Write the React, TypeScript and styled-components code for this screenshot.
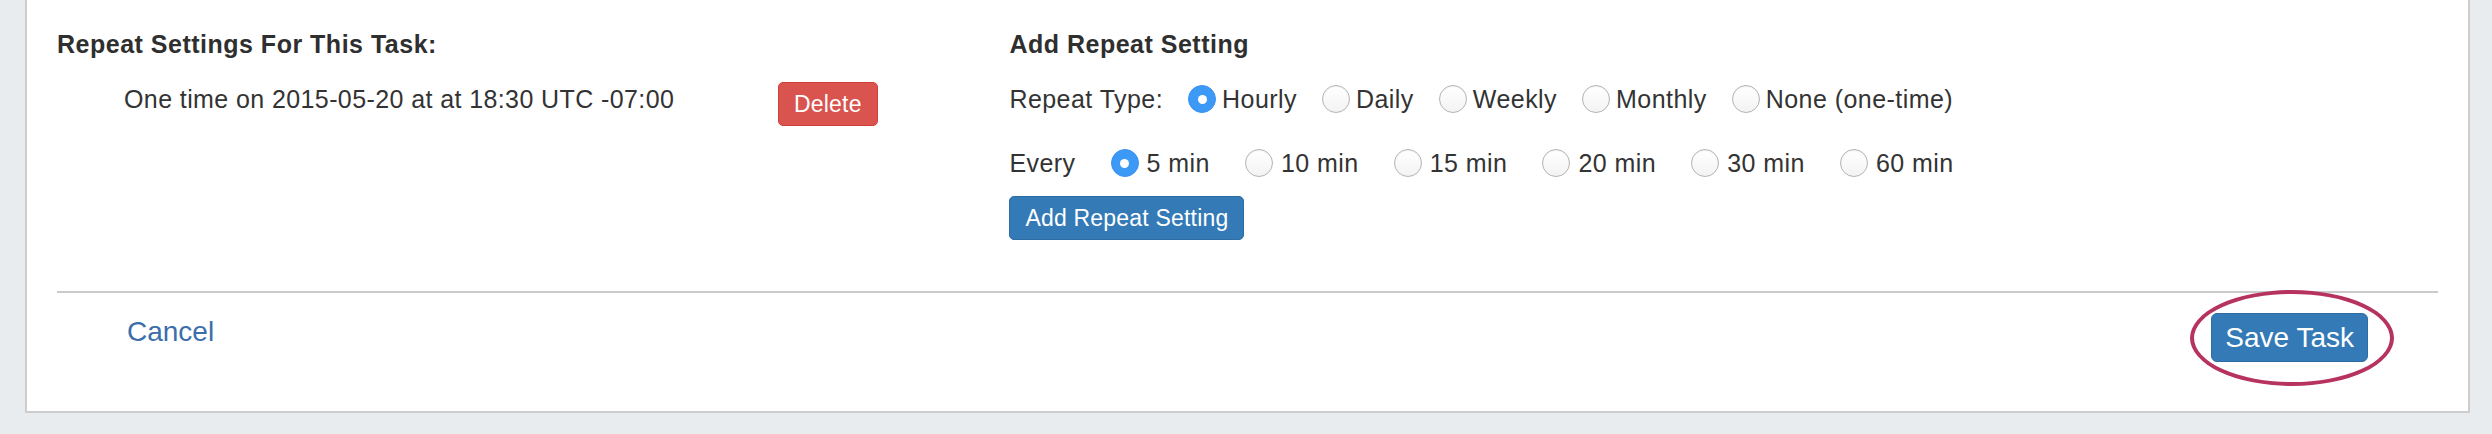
import styled, { createGlobalStyle } from "styled-components";

const GlobalStyle = createGlobalStyle`
  html, body {
    margin: 0;
    padding: 0;
    background: #e8ecef;
  }
  body {
    min-height: 434px;
    font-family: "Liberation Sans", Arial, sans-serif;
    color: #333;
  }
`;

const repeatTypes = ["Hourly", "Daily", "Weekly", "Monthly", "None (one-time)"];
const intervals = ["5 min", "10 min", "15 min", "20 min", "30 min", "60 min"];

const App = () => {
  return (
    <>
      <GlobalStyle />
      <Panel>
        <Columns>
          <Column>
            <Heading>Repeat Settings For This Task:</Heading>
            <SettingItem>
              <SettingText>One time on 2015-05-20 at at 18:30 UTC -07:00</SettingText>
              <SmallButton $variant="danger">Delete</SmallButton>
            </SettingItem>
          </Column>

          <Column>
            <Heading>Add Repeat Setting</Heading>
            <OptionRow $gap={25}>
              <RowLabel>Repeat Type:</RowLabel>
              {repeatTypes.map((t, i) => (
                <Choice key={t} $textGap={6}>
                  <Radio $checked={i === 0} />
                  {t}
                </Choice>
              ))}
            </OptionRow>
            <OptionRow $gap={35} $top={30}>
              <RowLabel>Every</RowLabel>
              {intervals.map((t, i) => (
                <Choice key={t} $textGap={8}>
                  <Radio $checked={i === 0} />
                  {t}
                </Choice>
              ))}
            </OptionRow>
            <SmallButton $variant="primary" style={{ marginTop: 16 }}>
              Add Repeat Setting
            </SmallButton>
          </Column>
        </Columns>

        <Divider />

        <Footer>
          <CancelLink href="#">Cancel</CancelLink>
          <Highlight>
            <SaveButton>Save Task</SaveButton>
            <Circle />
          </Highlight>
        </Footer>
      </Panel>
    </>
  );
};

const Panel = styled.div`
  margin: 0 22px 0 25px;
  padding: 27px 30px 49px;
  background: #fff;
  border: 2px solid #cdcdcd;
  border-top: none;
`;

const Columns = styled.div`
  display: grid;
  grid-template-columns: 40% 1fr;
`;

const Column = styled.div`
  display: flex;
  flex-direction: column;
  align-items: flex-start;
`;

const Heading = styled.div`
  font-size: 25px;
  line-height: 34px;
  font-weight: bold;
  letter-spacing: 0.5px;
  color: #2f2f2f;
`;

const SettingItem = styled.div`
  display: grid;
  grid-template-columns: 654px auto;
  align-items: start;
  margin-top: 21px;
  padding-left: 67px;
`;

const SettingText = styled.div`
  font-size: 25px;
  line-height: 34px;
  letter-spacing: 0.4px;
`;

const SmallButton = styled.button<{ $variant: "danger" | "primary" }>`
  font-family: "Liberation Sans", Arial, sans-serif;
  font-size: 23px;
  line-height: 34px;
  letter-spacing: 0.2px;
  padding: 4px 15px;
  border-radius: 5px;
  color: #fff;
  cursor: pointer;
  border: 1px solid ${(p) => (p.$variant === "danger" ? "#d43f3a" : "#2e6da4")};
  background: ${(p) => (p.$variant === "danger" ? "#d9534f" : "#337ab7")};
`;

const OptionRow = styled.div<{ $gap: number; $top?: number }>`
  display: flex;
  align-items: center;
  gap: ${(p) => p.$gap}px;
  margin-top: ${(p) => p.$top ?? 21}px;
  font-size: 25px;
  line-height: 34px;
  letter-spacing: 0.45px;
`;

const RowLabel = styled.span``;

const Choice = styled.label<{ $textGap: number }>`
  display: flex;
  align-items: center;
  gap: ${(p) => p.$textGap}px;
  white-space: nowrap;
`;

const Radio = styled.span<{ $checked: boolean }>`
  width: 28px;
  height: 28px;
  box-sizing: border-box;
  border-radius: 50%;
  display: flex;
  align-items: center;
  justify-content: center;
  border: 1px solid ${(p) => (p.$checked ? "#3b92f0" : "#b4b4b4")};
  background: ${(p) =>
    p.$checked ? "#3d99f6" : "linear-gradient(#ffffff, #f3f3f3)"};
  box-shadow: ${(p) => (p.$checked ? "none" : "inset 0 1px 1px rgba(0,0,0,0.06)")};

  &::after {
    content: "";
    display: ${(p) => (p.$checked ? "block" : "none")};
    width: 9px;
    height: 9px;
    border-radius: 50%;
    background: #fff;
  }
`;

const Divider = styled.hr`
  margin: 51px 0 0;
  border: none;
  border-top: 2px solid #cacaca;
`;

const Footer = styled.div`
  display: flex;
  justify-content: space-between;
  align-items: flex-start;
  padding: 20px 70px 0;
`;

const CancelLink = styled.a`
  font-size: 28px;
  line-height: 37px;
  color: #3c6eab;
  text-decoration: none;
`;

const Highlight = styled.div`
  position: relative;
`;

const SaveButton = styled.button`
  font-family: "Liberation Sans", Arial, sans-serif;
  font-size: 28px;
  line-height: 37px;
  padding: 5px 13px;
  border-radius: 6px;
  color: #fff;
  background: #337ab7;
  border: 1px solid #2e6da4;
  cursor: pointer;
`;

const Circle = styled.span`
  position: absolute;
  left: -21px;
  top: -23px;
  width: 204px;
  height: 96px;
  box-sizing: border-box;
  border: 4px solid #b6325f;
  border-radius: 50%;
  pointer-events: none;
`;

export default App;
